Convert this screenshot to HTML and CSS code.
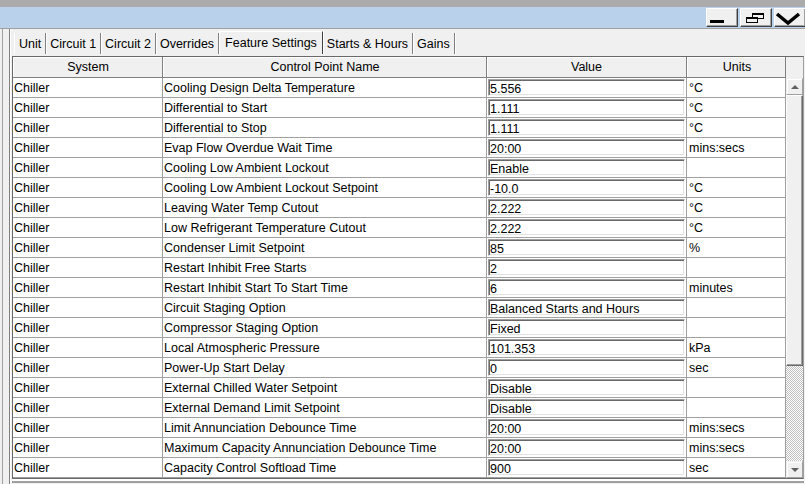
FILE: index.html
```html
<!doctype html>
<html lang="en">
	<head>
		<meta charset="utf-8" />
		<title>Feature Settings</title>
		<link rel="stylesheet" href="styles.css">
	</head>
	<body>
		<div class="topbar"></div>
		<div class="titlebar">
			<div class="winbtns">
				<div class="winbtn"><span class="minbar"></span></div>
				<div class="winbtn">
					<svg width="32" height="19" viewBox="0 0 32 19">
						<rect x="12.5" y="5.5" width="11" height="5" fill="none" stroke="#000" />
						<rect x="12" y="5" width="12" height="2" fill="#000" />
						<rect x="6.5" y="9.5" width="11" height="5" fill="#f0f0f0" stroke="#000" />
						<rect x="6" y="9" width="12" height="2" fill="#000" />
					</svg>
				</div>
				<div class="winbtn">
					<svg width="32" height="19" viewBox="0 0 32 19">
						<polyline points="3,6 14,15 25,6" fill="none" stroke="#000" stroke-width="3.5" />
					</svg>
				</div>
			</div>
		</div>

		<div class="frame">
			<div class="panel">
				<div class="page">
					<ul class="tabs">
						<li>Unit</li>
						<li>Circuit 1</li>
						<li>Circuit 2</li>
						<li>Overrides</li>
						<li class="active">Feature Settings</li>
						<li>Starts &amp; Hours</li>
						<li>Gains</li>
					</ul>

					<div class="grid">
						<div class="table">
							<div class="row head">
								<div class="c1">System</div>
								<div class="c2">Control Point Name</div>
								<div class="c3">Value</div>
								<div class="c4">Units</div>
							</div>
							<div class="row"><div class="c1">Chiller</div><div class="c2">Cooling Design Delta Temperature</div><div class="c3"><div class="box">5.556</div></div><div class="c4">°C</div></div>
							<div class="row"><div class="c1">Chiller</div><div class="c2">Differential to Start</div><div class="c3"><div class="box">1.111</div></div><div class="c4">°C</div></div>
							<div class="row"><div class="c1">Chiller</div><div class="c2">Differential to Stop</div><div class="c3"><div class="box">1.111</div></div><div class="c4">°C</div></div>
							<div class="row"><div class="c1">Chiller</div><div class="c2">Evap Flow Overdue Wait Time</div><div class="c3"><div class="box">20:00</div></div><div class="c4">mins:secs</div></div>
							<div class="row"><div class="c1">Chiller</div><div class="c2">Cooling Low Ambient Lockout</div><div class="c3"><div class="box">Enable</div></div><div class="c4"></div></div>
							<div class="row"><div class="c1">Chiller</div><div class="c2">Cooling Low Ambient Lockout Setpoint</div><div class="c3"><div class="box">-10.0</div></div><div class="c4">°C</div></div>
							<div class="row"><div class="c1">Chiller</div><div class="c2">Leaving Water Temp Cutout</div><div class="c3"><div class="box">2.222</div></div><div class="c4">°C</div></div>
							<div class="row"><div class="c1">Chiller</div><div class="c2">Low Refrigerant Temperature Cutout</div><div class="c3"><div class="box">2.222</div></div><div class="c4">°C</div></div>
							<div class="row"><div class="c1">Chiller</div><div class="c2">Condenser Limit Setpoint</div><div class="c3"><div class="box">85</div></div><div class="c4">%</div></div>
							<div class="row"><div class="c1">Chiller</div><div class="c2">Restart Inhibit Free Starts</div><div class="c3"><div class="box">2</div></div><div class="c4"></div></div>
							<div class="row"><div class="c1">Chiller</div><div class="c2">Restart Inhibit Start To Start Time</div><div class="c3"><div class="box">6</div></div><div class="c4">minutes</div></div>
							<div class="row"><div class="c1">Chiller</div><div class="c2">Circuit Staging Option</div><div class="c3"><div class="box">Balanced Starts and Hours</div></div><div class="c4"></div></div>
							<div class="row"><div class="c1">Chiller</div><div class="c2">Compressor Staging Option</div><div class="c3"><div class="box">Fixed</div></div><div class="c4"></div></div>
							<div class="row"><div class="c1">Chiller</div><div class="c2">Local Atmospheric Pressure</div><div class="c3"><div class="box">101.353</div></div><div class="c4">kPa</div></div>
							<div class="row"><div class="c1">Chiller</div><div class="c2">Power-Up Start Delay</div><div class="c3"><div class="box">0</div></div><div class="c4">sec</div></div>
							<div class="row"><div class="c1">Chiller</div><div class="c2">External Chilled Water Setpoint</div><div class="c3"><div class="box">Disable</div></div><div class="c4"></div></div>
							<div class="row"><div class="c1">Chiller</div><div class="c2">External Demand Limit Setpoint</div><div class="c3"><div class="box">Disable</div></div><div class="c4"></div></div>
							<div class="row"><div class="c1">Chiller</div><div class="c2">Limit Annunciation Debounce Time</div><div class="c3"><div class="box">20:00</div></div><div class="c4">mins:secs</div></div>
							<div class="row"><div class="c1">Chiller</div><div class="c2">Maximum Capacity Annunciation Debounce Time</div><div class="c3"><div class="box">20:00</div></div><div class="c4">mins:secs</div></div>
							<div class="row"><div class="c1">Chiller</div><div class="c2">Capacity Control Softload Time</div><div class="c3"><div class="box">900</div></div><div class="c4">sec</div></div>
						</div>

						<div class="scroll">
							<div class="sbtn up"><span></span></div>
							<div class="thumb"></div>
							<div class="track"></div>
							<div class="sbtn down"><span></span></div>
						</div>
					</div>
				</div>
			</div>
		</div>
	</body>
</html>
```

FILE: styles.css
```css
body {
	margin: 0;
	height: 484px;
	overflow: hidden;
	background-color: #f0f0f0;
	font-family: "Liberation Sans", Arial, sans-serif;
	font-size: 12.5px;
	color: #000;
}

.topbar {
	height: 7px;
	background-color: #ababab;
}

.titlebar {
	height: 21px;
	background-color: #b9d1ea;
	border-bottom: 1px solid #a0a0a0;
	display: flex;
	justify-content: flex-end;
	align-items: flex-end;
}

.winbtns {
	display: flex;
	gap: 2px;
	margin-bottom: 1px;
	margin-right: -1px;
}

.winbtn {
	position: relative;
	width: 32px;
	height: 19px;
	box-sizing: border-box;
	background-color: #f0f0f0;
	border: 1px solid;
	border-color: #fff #404040 #404040 #fff;
	box-shadow: inset -1px -1px #a0a0a0;
}

.winbtn svg {
	display: block;
	margin: -1px 0 0 -1px;
}

.minbar {
	position: absolute;
	left: 3px;
	top: 11px;
	width: 14px;
	height: 3px;
	background-color: #000;
}

.frame {
	height: 455px;
	box-sizing: border-box;
	padding-left: 2px;
}

.panel {
	height: 100%;
	box-sizing: border-box;
	border-left: 1px solid #a0a0a0;
	padding-left: 6px;
}

.page {
	height: 100%;
	box-sizing: border-box;
	border-left: 1px solid #808080;
	box-shadow: inset 1px 0 #fff;
}

.tabs {
	display: flex;
	list-style: none;
	margin: 0;
	padding: 4px 0 0 4px;
	height: 21px;
}

.tabs li {
	height: 21px;
	line-height: 22px;
	padding: 0 4px;
	border-right: 1px solid #808080;
	box-shadow: 1px 0 #fff;
	white-space: nowrap;
}

.tabs li:first-child {
	border-left: 1px solid #fff;
}

.tabs li.active {
	margin-top: -2px;
	height: 23px;
	line-height: 23px;
	padding: 0 5px;
	border-top: 1px solid #fff;
	border-left: 1px solid #fff;
	border-right: 1px solid #404040;
	box-sizing: border-box;
}

.grid {
	display: flex;
	margin-top: 2px;
	margin-left: 2px;
	border-top: 1px solid #696969;
	border-left: 1px solid #696969;
	border-right: 1px solid #a0a0a0;
	border-bottom: 1px solid #696969;
	width: 792px;
	box-sizing: border-box;
	box-shadow: 0 2px 0 #fff, 0 4px 0 #a0a0a0;
}

.table {
	width: 773px;
	flex: none;
	background-color: #fff;
}

.row {
	display: flex;
	height: 20px;
	box-sizing: border-box;
	border-bottom: 1px solid #a0a0a0;
	line-height: 20px;
}

.row > div {
	flex: none;
	box-sizing: border-box;
	border-right: 1px solid #a0a0a0;
	padding-left: 1px;
	white-space: nowrap;
	overflow: hidden;
}

.row .c1 {
	width: 150px;
}

.row .c2 {
	width: 324px;
}

.row .c3 {
	width: 200px;
	padding-left: 0;
}

.row .c4 {
	width: 99px;
	padding-left: 2px;
}

.row.head {
	height: 21px;
	line-height: 20px;
	background-color: #f0f0f0;
	border-bottom-color: #808080;
}

.row.head > div {
	text-align: center;
	box-shadow: inset 1px 1px #fff;
	border-right-color: #808080;
}

.box {
	margin: 1px 1px 0 1px;
	height: 17px;
	box-sizing: border-box;
	border: 1px solid;
	border-color: #a0a0a0 #fff #fff #a0a0a0;
	box-shadow: inset 1px 1px #696969, inset -1px -1px #e3e3e3;
	padding: 1px 0 0 1px;
	line-height: 16px;
	background-color: #fff;
}

.scroll {
	width: 17px;
	flex: none;
	padding-top: 21px;
	background-color: #f0f0f0;
	display: flex;
	flex-direction: column;
}

.sbtn {
	height: 17px;
	box-sizing: border-box;
	display: flex;
	align-items: center;
	justify-content: center;
	border: 1px solid;
	border-color: #f0f0f0 #a0a0a0 #a0a0a0 #f0f0f0;
	box-shadow: inset 1px 1px #fff;
}

.sbtn span {
	width: 0;
	height: 0;
	border-left: 4px solid transparent;
	border-right: 4px solid transparent;
}

.sbtn.up span {
	border-bottom: 4px solid #606060;
}

.sbtn.down span {
	border-top: 4px solid #606060;
}

.thumb {
	height: 271px;
	box-sizing: border-box;
	border: 1px solid;
	border-color: #fff #696969 #696969 #fff;
	box-shadow: inset -1px -1px #a0a0a0;
}

.track {
	flex: 1;
	background-image: conic-gradient(#fff 25%, #c0c0c0 0 50%, #fff 0 75%, #c0c0c0 0);
	background-size: 2px 2px;
}
```
